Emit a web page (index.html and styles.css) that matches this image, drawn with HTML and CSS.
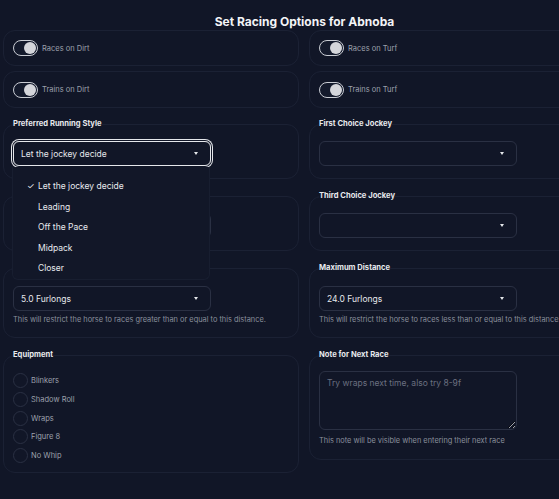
FILE: index.html
```html
<!DOCTYPE html>
<html lang="en">
<head>
<meta charset="utf-8">
<title>Set Racing Options for Abnoba</title>
<link rel="stylesheet" href="styles.css">
</head>
<body>
<div class="page">
  <h1 class="title">Set Racing Options for Abnoba</h1>
  <div class="grid">
    <div class="card toggle-card">
      <span class="toggle"><span class="knob"></span></span>
      <span class="toggle-label">Races on Dirt</span>
    </div>
    <div class="card toggle-card">
      <span class="toggle"><span class="knob"></span></span>
      <span class="toggle-label">Races on Turf</span>
    </div>
    <div class="card toggle-card second">
      <span class="toggle"><span class="knob"></span></span>
      <span class="toggle-label">Trains on Dirt</span>
    </div>
    <div class="card toggle-card second">
      <span class="toggle"><span class="knob"></span></span>
      <span class="toggle-label">Trains on Turf</span>
    </div>

    <fieldset class="field">
      <legend class="legend">Preferred Running Style</legend>
      <div class="select focused"><span class="select-text">Let the jockey decide</span><span class="caret"></span></div>
    </fieldset>
    <fieldset class="field">
      <legend class="legend">First Choice Jockey</legend>
      <div class="select"><span class="select-text"></span><span class="caret"></span></div>
    </fieldset>

    <fieldset class="field">
      <legend class="legend">Second Choice Jockey</legend>
      <div class="select"><span class="select-text"></span><span class="caret"></span></div>
    </fieldset>
    <fieldset class="field">
      <legend class="legend">Third Choice Jockey</legend>
      <div class="select"><span class="select-text"></span><span class="caret"></span></div>
    </fieldset>

    <fieldset class="field distance">
      <legend class="legend">Minimum Distance</legend>
      <div class="select"><span class="select-text">5.0 Furlongs</span><span class="caret"></span></div>
      <p class="help">This will restrict the horse to races greater than or equal to this distance.</p>
    </fieldset>
    <fieldset class="field distance">
      <legend class="legend">Maximum Distance</legend>
      <div class="select"><span class="select-text">24.0 Furlongs</span><span class="caret"></span></div>
      <p class="help">This will restrict the horse to races less than or equal to this distance.</p>
    </fieldset>

    <fieldset class="field equipment">
      <legend class="legend">Equipment</legend>
      <ul class="checks">
        <li class="check"><span class="circle"></span>Blinkers</li>
        <li class="check"><span class="circle"></span>Shadow Roll</li>
        <li class="check"><span class="circle"></span>Wraps</li>
        <li class="check"><span class="circle"></span>Figure 8</li>
        <li class="check"><span class="circle"></span>No Whip</li>
      </ul>
    </fieldset>
    <fieldset class="field note-field">
      <legend class="legend">Note for Next Race</legend>
      <textarea class="note" placeholder="Try wraps next time, also try 8-9f"></textarea>
      <p class="help note-help">This note will be visible when entering their next race</p>
    </fieldset>
  </div>

  <ul class="menu">
    <li class="menu-item checked"><span class="tick">✓</span>Let the jockey decide</li>
    <li class="menu-item"><span class="tick"></span>Leading</li>
    <li class="menu-item"><span class="tick"></span>Off the Pace</li>
    <li class="menu-item"><span class="tick"></span>Midpack</li>
    <li class="menu-item"><span class="tick"></span>Closer</li>
  </ul>
</div>
</body>
</html>
```

FILE: styles.css
```css
html, body {
  margin: 0;
  padding: 0;
  background: #111627;
  overflow: hidden;
}

body {
  font-family: Inter, "Noto Sans", "Liberation Sans", sans-serif;
  color: #e5e7eb;
  width: 559px;
  height: 499px;
}

.page {
  position: relative;
  width: 603px;
  margin-left: 3px;
}

.title {
  margin: 0;
  padding-top: 14px;
  font-size: 12px;
  line-height: 16px;
  font-weight: 700;
  text-align: center;
  color: #f3f4f6;
}

.grid {
  display: grid;
  grid-template-columns: 296px 296px;
  column-gap: 10px;
  row-gap: 11px;
  align-items: start;
}

.card {
  border: 1px solid #1b2134;
  border-radius: 12px;
  box-sizing: border-box;
}

.toggle-card {
  display: flex;
  align-items: center;
  gap: 4px;
  height: 36px;
  padding: 0 9px;
  margin-bottom: -6px;
}

.toggle-card.second {
  height: 37px;
  margin-bottom: -1px;
}

.toggle {
  position: relative;
  width: 25px;
  height: 16px;
  box-sizing: border-box;
  border: 1px solid #c9ccd3;
  border-radius: 8px;
  background: #141a2c;
  flex: none;
}

.knob {
  position: absolute;
  top: 1px;
  right: 1px;
  width: 12px;
  height: 12px;
  border-radius: 50%;
  background: #d4d5da;
}

.toggle-label {
  font-size: 7.5px;
  color: #9ca0ab;
}

.field {
  margin: 0;
  border: 1px solid #1b2134;
  border-radius: 12px;
  padding: 0 9px 12px;
  min-width: 0;
}

.legend {
  padding: 0;
  font-size: 7.6px;
  line-height: 12px;
  font-weight: 700;
  color: #e8eaee;
}

.select {
  display: flex;
  align-items: center;
  justify-content: space-between;
  width: 198px;
  height: 25px;
  box-sizing: border-box;
  margin-top: 11px;
  padding: 0 12px 0 7px;
  border: 1px solid #2a3043;
  border-radius: 6px;
}

.select.focused {
  border-color: #e5e7eb;
  box-shadow: 0 0 0 1px #111627, 0 0 0 2px #e5e7eb;
}

.select-text {
  font-size: 8.5px;
  color: #e5e7eb;
}

.caret {
  width: 0;
  height: 0;
  border-left: 2.5px solid transparent;
  border-right: 2.5px solid transparent;
  border-top: 3px solid #e5e7eb;
}

.help {
  margin: 4px 0 0;
  font-size: 7.4px;
  line-height: 11px;
  color: #8a909c;
  white-space: nowrap;
}

.distance .help {
  margin-top: 3px;
}

.distance .select {
  margin-top: 12px;
}

.equipment {
  padding-bottom: 9px;
}

.checks {
  list-style: none;
  margin: 12px 0 0;
  padding: 0;
  display: flex;
  flex-direction: column;
  gap: 3.8px;
}

.check {
  display: flex;
  align-items: center;
  gap: 3px;
  height: 15px;
  font-size: 7.5px;
  color: #9ca0ab;
}

.circle {
  width: 15px;
  height: 15px;
  box-sizing: border-box;
  border: 1px solid #2a3043;
  border-radius: 50%;
  flex: none;
}

.note {
  display: block;
  width: 198px;
  height: 59px;
  box-sizing: border-box;
  margin: 10px 0 0;
  padding: 6px 7px;
  background: transparent;
  border: 1px solid #2a3043;
  border-radius: 6px;
  font-family: Inter, "Noto Sans", "Liberation Sans", sans-serif;
  font-size: 8.5px;
  color: #e5e7eb;
  resize: vertical;
  outline: none;
}

.note::placeholder {
  color: #6b7080;
}

.note-field {
  padding-bottom: 13px;
}

.note-help {
  margin-top: 5px;
}

.menu {
  position: absolute;
  left: 9px;
  top: 167px;
  width: 198px;
  height: 113px;
  box-sizing: border-box;
  margin: 0;
  padding: 9px 0 0;
  list-style: none;
  background: #121728;
  border: 1px solid #181e30;
  border-top: none;
  border-radius: 0 0 6px 6px;
}

.menu-item {
  display: flex;
  align-items: center;
  height: 20.5px;
  font-size: 8.5px;
  color: #e8eaee;
}

.tick {
  width: 25px;
  padding-left: 14px;
  box-sizing: border-box;
  font-size: 8.5px;
  flex: none;
}
```
